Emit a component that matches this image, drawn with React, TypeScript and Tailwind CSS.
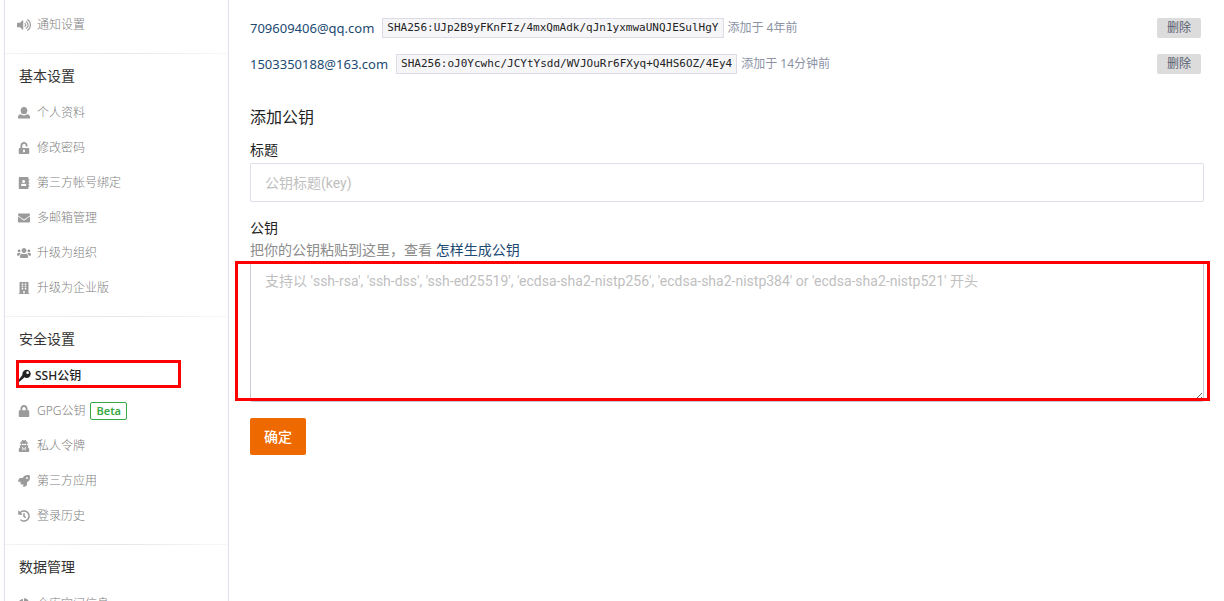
import type { ReactNode } from "react";
import {
  FaAddressBook,
  FaBuilding,
  FaChartPie,
  FaEnvelope,
  FaHistory,
  FaLock,
  FaRocket,
  FaUnlockAlt,
  FaUserSecret,
  FaUsers,
  FaVolumeUp,
} from "react-icons/fa";

type NavItem = {
  label: string;
  icon: ReactNode;
  active?: boolean;
  badge?: string;
};

type NavSection = {
  title?: string;
  items: NavItem[];
};

function KeyIcon() {
  return (
    <svg viewBox="0 0 16 16" className="size-[14px]" fill="currentColor" aria-hidden="true">
      <path
        fillRule="evenodd"
        d="M10.8 1a4.6 4.6 0 0 0-4.5 5.7L1 13.6V15h1l6.6-5.5A4.6 4.6 0 1 0 10.8 1Zm1.3 1.7a1.5 1.5 0 1 1 0 3 1.5 1.5 0 0 1 0-3Z"
      />
    </svg>
  );
}

function UserIcon() {
  return (
    <svg viewBox="0 0 12 12" className="size-3" fill="currentColor" aria-hidden="true">
      <ellipse cx="6" cy="3.6" rx="3.3" ry="3.6" />
      <path d="M0 11.5V10c0-1.6 1.2-2.5 3-2.7a4.800 4.800 0 0 0 6 0c1.800.2 3 1.100 3 2.700v1.500Z" />
    </svg>
  );
}

const sections: NavSection[] = [
  { items: [{ label: "通知设置", icon: <FaVolumeUp size={14} /> }] },
  {
    title: "基本设置",
    items: [
      { label: "个人资料", icon: <UserIcon /> },
      { label: "修改密码", icon: <FaUnlockAlt size={12} /> },
      { label: "第三方帐号绑定", icon: <FaAddressBook size={12} /> },
      { label: "多邮箱管理", icon: <FaEnvelope size={12} /> },
      { label: "升级为组织", icon: <FaUsers size={14} /> },
      { label: "升级为企业版", icon: <FaBuilding size={12} /> },
    ],
  },
  {
    title: "安全设置",
    items: [
      { label: "SSH公钥", icon: <KeyIcon />, active: true },
      { label: "GPG公钥", icon: <FaLock size={12} />, badge: "Beta" },
      { label: "私人令牌", icon: <FaUserSecret size={12} /> },
      { label: "第三方应用", icon: <FaRocket size={12} /> },
      { label: "登录历史", icon: <FaHistory size={12} /> },
    ],
  },
  {
    title: "数据管理",
    items: [{ label: "仓库空间信息", icon: <FaChartPie size={12} /> }],
  },
];

const keys = [
  {
    title: "709609406@qq.com",
    fingerprint: "SHA256:UJp2B9yFKnFIz/4mxQmAdk/qJn1yxmwaUNQJESulHgY",
    added: "添加于 4年前",
  },
  {
    title: "1503350188@163.com",
    fingerprint: "SHA256:oJ0Ycwhc/JCYtYsdd/WVJOuRr6FXyq+Q4HS6OZ/4Ey4",
    added: "添加于 14分钟前",
  },
];

function SidebarItem({ item }: { item: NavItem }) {
  return (
    <li className="relative">
      <a
        href="#"
        className={`flex h-[35px] items-center pl-[11px] text-xs ${
          item.active ? "gap-[3px] font-medium text-[#222]" : "gap-[5px] font-light text-[#808080]"
        }`}
      >
        <span
          className={`flex w-4 shrink-0 items-center justify-center ${
            item.active ? "text-[#222]" : "text-[#9b9b9b]"
          }`}
        >
          {item.icon}
        </span>
        <span>{item.label}</span>
        {item.badge && (
          <span className="rounded-[2px] border border-[#39a845] px-[5px] text-[11px] leading-4 font-semibold text-[#39a845]">
            {item.badge}
          </span>
        )}
      </a>
      {item.active && (
        <span className="pointer-events-none absolute top-[2px] left-[11px] h-7 w-[165px] border-3 border-[#f00]" />
      )}
    </li>
  );
}

function Sidebar() {
  return (
    <nav className="ml-1 w-[225px] shrink-0 overflow-hidden border-x border-[#dfe2ec] pt-[7px]">
      {sections.map((section, index) => (
        <section key={index} className="pb-[11px]">
          {section.title && (
            <>
              <div className="h-px bg-linear-to-r from-[#f4f4f4] via-[#e6e6e6] to-[#f8f8f8]" />
              <h2 className="mt-2 mb-[5px] pl-[14px] text-sm leading-7 text-[#333]">
                {section.title}
              </h2>
            </>
          )}
          <ul>
            {section.items.map((item) => (
              <SidebarItem key={item.label} item={item} />
            ))}
          </ul>
        </section>
      ))}
    </nav>
  );
}

export default function App() {
  return (
    <div className="flex h-screen overflow-hidden bg-white font-['Noto_Sans','Noto_Sans_CJK_SC',sans-serif] text-sm text-[#222]">
      <Sidebar />

      <main className="min-w-0 flex-1 pt-[10px] pr-5 pl-[21px]">
        <ul>
          {keys.map((key) => (
            <li key={key.title} className="flex h-9 items-center pr-[3px]">
              <a href="#" className="text-[13px] text-[#1c4a72]">
                {key.title}
              </a>
              <code className="ml-2 border border-[#dcdce6] bg-[#f6f6f9] px-1 font-['DejaVu_Sans_Mono',monospace] text-[11px] leading-[18px] text-[#222]">
                {key.fingerprint}
              </code>
              <span className="ml-1 text-xs text-[#8c92a4]">{key.added}</span>
              <button
                type="button"
                className="ml-auto h-5 w-11 rounded-[2px] bg-[#dcdcdc] text-xs text-[#596072]"
              >
                删除
              </button>
            </li>
          ))}
        </ul>

        <form>
          <h3 className="mt-[23px] text-base leading-6">添加公钥</h3>

          <label htmlFor="key-title" className="mt-[11px] block leading-5">
            标题
          </label>
          <input
            id="key-title"
            type="text"
            placeholder="公钥标题(key)"
            className="mt-[3px] block h-[39px] w-full rounded-[2px] border border-[#dce0e8] px-[14px] font-[Roboto,'Noto_Sans_CJK_SC',sans-serif] text-sm outline-none placeholder:text-[#bfbfbf]"
          />

          <label htmlFor="key-body" className="mt-4 block leading-5">
            公钥
          </label>
          <p className="mt-[2px] leading-5 text-[#8c8c8c]">
            把你的公钥粘贴到这里，查看{" "}
            <a href="#" className="text-[#1c4a72]">
              怎样生成公钥
            </a>
          </p>
          <div className="relative mt-[1px]">
            <textarea
              id="key-body"
              placeholder="支持以 'ssh-rsa', 'ssh-dss', 'ssh-ed25519', 'ecdsa-sha2-nistp256', 'ecdsa-sha2-nistp384' or 'ecdsa-sha2-nistp521' 开头"
              className="block h-[141px] w-full resize-y rounded-[2px] border border-[#c9cad8] px-[14px] py-[9px] font-[Roboto,'Noto_Sans_CJK_SC',sans-serif] text-sm leading-5 outline-none placeholder:text-[#bfbfbf]"
            />
            <span className="pointer-events-none absolute top-0 -right-[6px] bottom-px -left-[15px] border-3 border-[#f00]" />
          </div>

          <button
            type="button"
            className="mt-4 h-[37px] w-14 rounded-[2px] bg-[#ee6a00] text-sm font-medium text-white"
          >
            确定
          </button>
        </form>
      </main>
    </div>
  );
}
